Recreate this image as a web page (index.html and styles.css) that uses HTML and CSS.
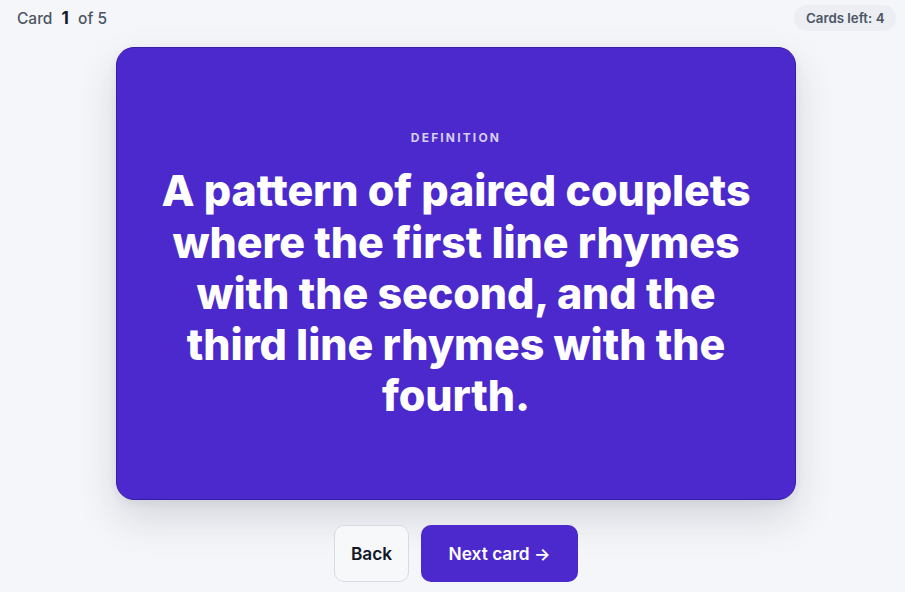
FILE: index.html
```html
<!DOCTYPE html>
<html lang="en">
<head>
<meta charset="utf-8">
<title>Flashcards</title>
<link rel="stylesheet" href="styles.css">
</head>
<body>
<div class="page">
  <header class="topbar">
    <div class="counter">Card <span class="current">1</span> of 5</div>
    <div class="pill">Cards left: 4</div>
  </header>
  <main class="card">
    <div class="label">DEFINITION</div>
    <p class="text">A pattern of paired couplets where the first line rhymes with the second, and the third line rhymes with the fourth.</p>
  </main>
  <nav class="actions">
    <button class="btn btn-back">Back</button>
    <button class="btn btn-next">Next card →</button>
  </nav>
</div>
</body>
</html>
```
FILE: styles.css
```css
* { box-sizing: border-box; }
html, body { margin: 0; height: 100%; }
body {
  background: #f5f6f9;
  font-family: Inter, "Noto Sans", sans-serif;
  color: #111827;
}
.page {
  padding: 5px 9px 0 16px;
  display: flex;
  flex-direction: column;
  align-items: center;
}
.topbar {
  width: 100%;
  height: 26px;
  padding-left: 1px;
  display: flex;
  align-items: center;
  justify-content: space-between;
}
.counter {
  font-size: 15.5px;
  color: #4b5563;
  font-weight: 500;
}
.current {
  font-size: 17px;
  font-weight: 700;
  color: #111827;
  margin: 0 5px;
}
.pill {
  background: #eceef3;
  color: #4b5563;
  font-size: 13.3px;
  font-weight: 600;
  padding: 0 11.5px;
  height: 26px;
  line-height: 26px;
  border-radius: 13px;
}
.card {
  margin-top: 16px;
  width: 680px;
  height: 453px;
  background: #4c29cc;
  border: 1px solid #3a1da6;
  border-radius: 18px;
  box-shadow: 0 18px 40px rgba(30, 30, 60, 0.14), 0 4px 10px rgba(30, 30, 60, 0.06);
  display: flex;
  flex-direction: column;
  align-items: center;
  justify-content: center;
  padding: 6px 40px 0;
  text-align: center;
}
.label {
  font-size: 12px;
  line-height: 14px;
  font-weight: 700;
  letter-spacing: 0.18em;
  color: rgba(255, 255, 255, 0.78);
  margin-bottom: 20px;
}
.text {
  margin: 0;
  color: #fff;
  font-size: 43px;
  line-height: 51.25px;
  font-weight: 800;
  letter-spacing: -0.002em;
}
.actions {
  margin-top: 25px;
  display: flex;
  gap: 12px;
}
.btn {
  height: 57px;
  border-radius: 10px;
  font-family: Inter, "Noto Sans", sans-serif;
  font-size: 17.3px;
  font-weight: 600;
  cursor: pointer;
}
.btn-back {
  width: 75px;
  background: #f7f8fa;
  border: 1px solid #d9dbe2;
  color: #111827;
}
.btn-next {
  width: 157px;
  background: #4c29cc;
  border: none;
  color: #fff;
}
```
